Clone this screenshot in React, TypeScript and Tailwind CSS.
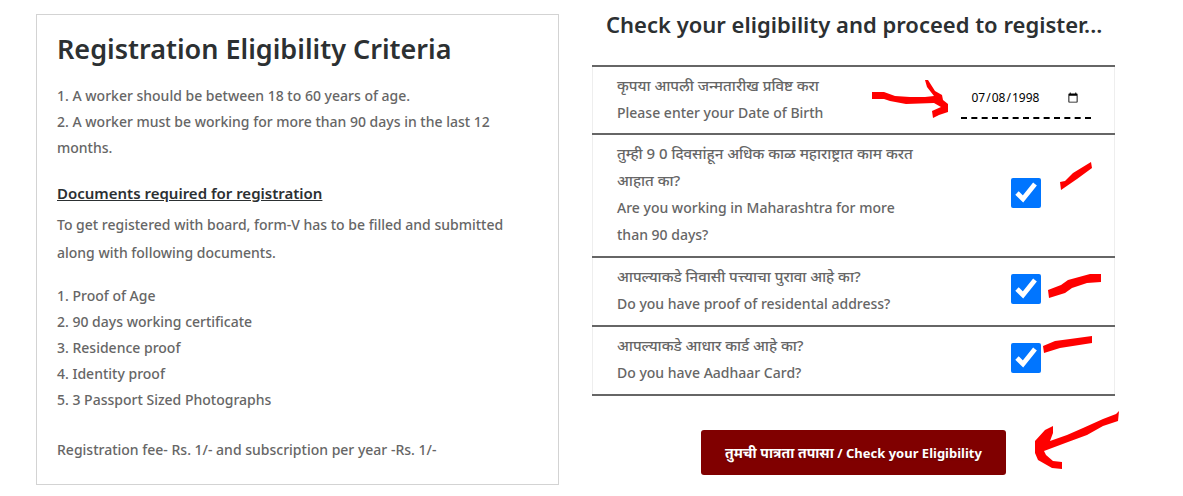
import { useState } from 'react';

const criteria = [
  'A worker should be between 18 to 60 years of age.',
  'A worker must be working for more than 90 days in the last 12 months.',
];

const documents = [
  'Proof of Age',
  '90 days working certificate',
  'Residence proof',
  'Identity proof',
  '3 Passport Sized Photographs',
];

const questions = [
  {
    id: 'working',
    mr: 'तुम्ही 9 0 दिवसांहून अधिक काळ महाराष्ट्रात काम करत आहात का?',
    en: 'Are you working in Maharashtra for more than 90 days?',
  },
  {
    id: 'address',
    mr: 'आपल्याकडे निवासी पत्त्याचा पुरावा आहे का?',
    en: 'Do you have proof of residental address?',
  },
  {
    id: 'aadhaar',
    mr: 'आपल्याकडे आधार कार्ड आहे का?',
    en: 'Do you have Aadhaar Card?',
  },
];

// Hand drawn red marks over the form
function Marks() {
  return (
    <svg
      className="pointer-events-none absolute top-0 right-0 h-[480px] w-[260px] overflow-visible"
      viewBox="855 0 260 480"
      fill="#fe0000"
      aria-hidden="true"
    >
      <path d="M872 92L884 92L895 96L910 97L925 97L934 96L927 87L925 80L928 80L935 91L942 95L943 100L948 104L948 112L939 115L933 118L932 111L941 107L934 103L906 104L890 101L884 99L872 99Z" />
      <path d="M1060 182L1065 181L1073 173L1091 162L1092 168L1077 179L1061 190Z" />
      <path d="M1048 290L1061 285L1068 280L1090 274L1101 274L1101 282L1087 283L1072 288L1065 293L1049 298Z" />
      <path d="M1043 346L1055 341L1070 339L1092 336L1092 343L1060 348L1044 353Z" />
      <path d="M1119 411L1116 414L1103 419L1083 428L1067 435L1050 441L1053 433L1053 426L1045 430L1035 441L1035 453L1038 460L1052 468L1062 469L1062 462L1053 461L1046 455L1044 451L1068 442L1087 435L1103 426L1118 421Z" />
    </svg>
  );
}

export default function App() {
  const [birthDate, setBirthDate] = useState('1998-07-08');
  const [answers, setAnswers] = useState<Record<string, boolean>>({
    working: true,
    address: true,
    aadhaar: true,
  });

  return (
    <main className="grid grid-cols-2 gap-[33px] bg-white pt-3.5 pr-[68px] pb-3 pl-9 font-['Noto_Sans','Open_Sans',sans-serif] text-sm font-medium text-[#666666]">
      {/* Criteria */}
      <section className="border border-[#d3d3d3] px-5 pt-4 pb-[21px]">
        <h1 className="text-[27px] leading-9 font-semibold text-[#2c3032]">Registration Eligibility Criteria</h1>
        <ol className="mt-4 list-inside list-decimal leading-[26px]">
          {criteria.map(item => (
            <li key={item}>{item}</li>
          ))}
        </ol>
        <h2 className="mt-5 text-[15px] leading-6 font-semibold text-[#2c3032] underline">
          Documents required for registration
        </h2>
        <p className="mt-1.5 leading-7">
          To get registered with board, form-V has to be filled and submitted along with following documents.
        </p>
        <ol className="mt-4 list-inside list-decimal leading-[26px]">
          {documents.map(item => (
            <li key={item}>{item}</li>
          ))}
        </ol>
        <p className="mt-6 leading-[26px]">Registration fee- Rs. 1/- and subscription per year -Rs. 1/-</p>
      </section>

      {/* Eligibility form */}
      <form className="relative -mt-3.5" onSubmit={e => e.preventDefault()}>
        <h2 className="pt-2 pl-3.5 text-[22px] leading-8 font-semibold text-[#2c3032]">
          Check your eligibility and proceed to register...
        </h2>
        <table className="mt-[25px] w-full table-fixed border-collapse border-x border-x-[#eeeeee] leading-[27px]">
          <colgroup>
            <col className="w-[66%]" />
            <col />
          </colgroup>
          <tbody>
            <tr className="border-y-2 border-y-[#666666]">
              <td className="pt-[5px] pr-4 pb-[7px] pl-6">
                <label htmlFor="dob" className="block">
                  <span lang="mr" className="block text-[15px]">कृपया आपली जन्मतारीख प्रविष्ट करा</span>
                  <span className="block">Please enter your Date of Birth</span>
                </label>
              </td>
              <td className="pb-0.5 text-center">
                <input
                  id="dob"
                  type="date"
                  value={birthDate}
                  onChange={e => setBirthDate(e.target.value)}
                  className="h-10 w-[130px] border-b-2 border-dashed border-black px-2.5 text-xs font-normal text-black outline-none"
                />
              </td>
            </tr>
            {questions.map(q => (
              <tr key={q.id} className="border-y-2 border-y-[#666666]">
                <td className="pt-[5px] pr-4 pb-2 pl-6">
                  <label htmlFor={q.id} className="block">
                    <span lang="mr" className="block text-[15px]">{q.mr}</span>
                    <span className="block">{q.en}</span>
                  </label>
                </td>
                <td className="pb-1.5 text-center">
                  <input
                    id={q.id}
                    type="checkbox"
                    checked={answers[q.id]}
                    onChange={e => setAnswers({ ...answers, [q.id]: e.target.checked })}
                    className="size-[30px] align-middle"
                  />
                </td>
              </tr>
            ))}
          </tbody>
        </table>
        <div className="mt-[34px] text-center">
          <button
            type="submit"
            className="h-[45px] rounded-[3px] bg-[#800000] px-6 text-[13px] font-bold text-white text-shadow-sm"
          >
            <span lang="mr" className="text-sm">तुमची पात्रता तपासा</span> / Check your Eligibility
          </button>
        </div>
        <Marks />
      </form>
    </main>
  );
}
